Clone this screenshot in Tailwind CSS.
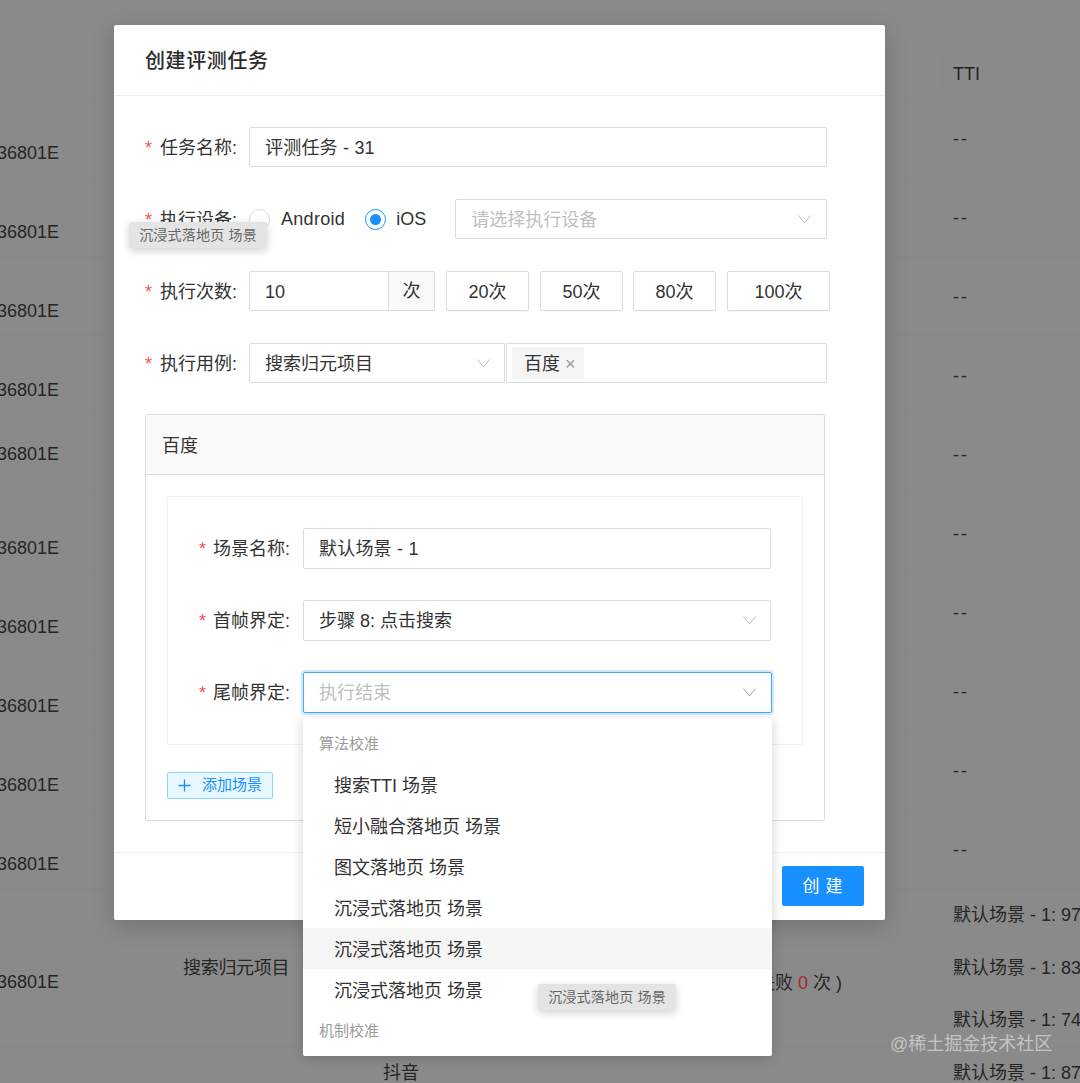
<!DOCTYPE html>
<html lang="zh-CN">
<head>
  <meta charset="UTF-8" />
  <title>创建评测任务</title>
  <script src="https://cdn.jsdelivr.net/npm/@tailwindcss/browser@4"></script>
</head>
<body class="bg-[#8a8a8a]">
  <div class="relative w-[1080px] h-[1083px] overflow-hidden bg-[#8a8a8a] text-[#262626] text-[18px] [font-family:'Liberation_Sans','Noto_Sans_CJK_SC',sans-serif]">

    <!-- table behind the mask -->
    <div>
      <div class="h-[99px] pt-[58px] pl-[942px] border-b border-[#878787]">
        <div class="h-8 pl-[10px] border-l border-[#848484] leading-[32px] text-[18px] font-medium text-[#222]">TTI</div>
      </div>
      <div class="h-[79px] relative border-b border-[#878787]"><span class="absolute -left-[3px] top-[41px] leading-[26px]">36801E</span><span class="absolute left-[953px] top-[27px] leading-[26px] tracking-[2px]">--</span></div>
      <div class="h-[79px] relative border-b border-[#878787]"><span class="absolute -left-[3px] top-[41px] leading-[26px]">36801E</span><span class="absolute left-[953px] top-[27px] leading-[26px] tracking-[2px]">--</span></div>
      <div class="h-[79px] relative border-b border-[#878787]"><span class="absolute -left-[3px] top-[41px] leading-[26px]">36801E</span><span class="absolute left-[953px] top-[27px] leading-[26px] tracking-[2px]">--</span></div>
      <div class="h-[79px] relative border-b border-[#878787]"><span class="absolute -left-[3px] top-[41px] leading-[26px]">36801E</span><span class="absolute left-[953px] top-[27px] leading-[26px] tracking-[2px]">--</span></div>
      <div class="h-[79px] relative border-b border-[#878787]"><span class="absolute -left-[3px] top-[26px] leading-[26px]">36801E</span><span class="absolute left-[953px] top-[27px] leading-[26px] tracking-[2px]">--</span></div>
      <div class="h-[79px] relative border-b border-[#878787]"><span class="absolute -left-[3px] top-[41px] leading-[26px]">36801E</span><span class="absolute left-[953px] top-[27px] leading-[26px] tracking-[2px]">--</span></div>
      <div class="h-[79px] relative border-b border-[#878787]"><span class="absolute -left-[3px] top-[41px] leading-[26px]">36801E</span><span class="absolute left-[953px] top-[27px] leading-[26px] tracking-[2px]">--</span></div>
      <div class="h-[79px] relative border-b border-[#878787]"><span class="absolute -left-[3px] top-[41px] leading-[26px]">36801E</span><span class="absolute left-[953px] top-[27px] leading-[26px] tracking-[2px]">--</span></div>
      <div class="h-[79px] relative border-b border-[#878787]"><span class="absolute -left-[3px] top-[41px] leading-[26px]">36801E</span><span class="absolute left-[953px] top-[27px] leading-[26px] tracking-[2px]">--</span></div>
      <div class="h-[79px] relative border-b border-[#878787]"><span class="absolute -left-[3px] top-[41px] leading-[26px]">36801E</span><span class="absolute left-[953px] top-[27px] leading-[26px] tracking-[2px]">--</span></div>
      <div class="h-[159px] relative border-b border-[#878787]">
        <span class="absolute -left-[3px] top-[80px] leading-[26px]">36801E</span>
        <span class="absolute left-[183px] top-[66px] leading-[26px] tracking-[-0.3px]">搜索归元项目</span>
        <span class="absolute left-[757px] top-[81px] leading-[26px] whitespace-pre">失败 <span class="text-[#a02a2a]">0</span> 次 )</span>
        <span class="absolute left-[953px] top-[13px] leading-[26px] whitespace-nowrap">默认场景 - 1: 97</span>
        <span class="absolute left-[953px] top-[66px] leading-[26px] whitespace-nowrap">默认场景 - 1: 83</span>
        <span class="absolute left-[953px] top-[118px] leading-[26px] whitespace-nowrap">默认场景 - 1: 74</span>
      </div>
      <div class="relative">
        <span class="absolute left-[383px] top-[12px] leading-[26px]">抖音</span>
        <span class="absolute left-[953px] top-[12px] leading-[26px] whitespace-nowrap">默认场景 - 1: 87</span>
      </div>
    </div>

    <!-- modal -->
    <div class="absolute left-[114px] top-[25px] w-[771px] h-[895px] bg-white rounded-[2px] shadow-[0_6px_24px_rgba(0,0,0,0.18)] flex flex-col">
      <div class="h-[71px] shrink-0 pl-[31px] pt-[2px] flex items-center border-b border-[#f0f0f0] text-[20px] font-medium tracking-[0.6px] text-[#2b2b2b]">创建评测任务</div>

      <div class="flex-1 pt-[31px] pl-[31px] flex flex-col">
        <div class="flex items-center h-10">
          <div class="w-[104px] shrink-0 pt-[2px] flex text-[#333]"><span class="w-[15px] text-[#f5515f]">*</span>任务名称:</div>
          <div class="w-[578px] h-10 border border-[#dcdcdc] rounded-[2px] pl-[15px] leading-[40px] text-[#333] tracking-[0.2px]">评测任务 - 31</div>
        </div>

        <div class="flex items-center h-10 mt-8">
          <div class="w-[104px] shrink-0 pt-[2px] flex text-[#333]"><span class="w-[15px] text-[#f5515f]">*</span>执行设备:</div>
          <span class="w-[21px] h-[21px] rounded-full border border-[#d9d9d9]"></span>
          <span class="ml-[11px] text-[#333] tracking-[0.3px]">Android</span>
          <span class="ml-5 w-[21px] h-[21px] rounded-full border border-[#1890ff] flex items-center justify-center"><span class="w-[11px] h-[11px] rounded-full bg-[#1890ff]"></span></span>
          <span class="ml-[10px] text-[#333]">iOS</span>
          <div class="ml-[29px] w-[372px] h-10 border border-[#dcdcdc] rounded-[2px] pl-[15px] pr-[15px] flex items-center justify-between text-[#bfbfbf]">
            <span class="pt-[2px]">请选择执行设备</span>
            <svg class="w-[13px] h-[9px]" viewBox="0 0 13 9" fill="none" stroke="#bfbfbf" stroke-width="1"><path d="M0.5 0.5L6.5 8L12.5 0.5" /></svg>
          </div>
        </div>

        <div class="flex items-center h-10 mt-8">
          <div class="w-[104px] shrink-0 pt-[2px] flex text-[#333]"><span class="w-[15px] text-[#f5515f]">*</span>执行次数:</div>
          <div class="w-[139px] h-10 border border-[#dcdcdc] border-r-0 rounded-l-[2px] pl-[15px] leading-[40px] text-[#333]">10</div>
          <div class="w-[47px] h-10 border border-[#dcdcdc] bg-[#fafafa] rounded-r-[2px] flex items-center justify-center text-[#333]">次</div>
          <button class="ml-[11px] w-[83px] h-10 pt-[2px] border border-[#dcdcdc] rounded-[2px] text-[#333] shadow-[0_1px_2px_rgba(0,0,0,0.04)]">20次</button>
          <button class="ml-[11px] w-[83px] h-10 pt-[2px] border border-[#dcdcdc] rounded-[2px] text-[#333] shadow-[0_1px_2px_rgba(0,0,0,0.04)]">50次</button>
          <button class="ml-[10px] w-[83px] h-10 pt-[2px] border border-[#dcdcdc] rounded-[2px] text-[#333] shadow-[0_1px_2px_rgba(0,0,0,0.04)]">80次</button>
          <button class="ml-[11px] w-[103px] h-10 pt-[2px] border border-[#dcdcdc] rounded-[2px] text-[#333] shadow-[0_1px_2px_rgba(0,0,0,0.04)]">100次</button>
        </div>

        <div class="flex items-center h-10 mt-8">
          <div class="w-[104px] shrink-0 pt-[2px] flex text-[#333]"><span class="w-[15px] text-[#f5515f]">*</span>执行用例:</div>
          <div class="w-[256px] h-10 border border-[#dcdcdc] rounded-l-[2px] pl-[15px] pr-[14px] flex items-center justify-between text-[#333]">
            <span class="pt-[2px]">搜索归元项目</span>
            <svg class="w-[13px] h-[9px]" viewBox="0 0 13 9" fill="none" stroke="#bfbfbf" stroke-width="1"><path d="M0.5 0.5L6.5 8L12.5 0.5" /></svg>
          </div>
          <div class="ml-px w-[321px] h-10 border border-[#dcdcdc] rounded-r-[2px] pl-[5px] flex items-center">
            <span class="w-[72px] h-8 bg-[#f5f5f5] rounded-[2px] pl-3 pt-[2px] flex items-center text-[#333]">百度<span class="ml-[5px] text-[18px] text-[#999]">×</span></span>
          </div>
        </div>

        <!-- case panel -->
        <div class="mt-[31px] w-[680px] h-[407px] border border-[#dcdcdc] rounded-[2px] flex flex-col">
          <div class="h-[60px] shrink-0 bg-[#fafafa] border-b border-[#dcdcdc] pl-4 pt-[3px] flex items-center text-[#333]">百度</div>
          <div class="pt-[21px] pl-[21px]">
            <div class="w-[636px] h-[249px] border border-[#f0f0f0] rounded-[2px] pt-[31px] flex flex-col gap-[31px]">
              <div class="flex items-center h-[41px]">
                <div class="w-[135px] shrink-0 pl-[31px] pt-[2px] flex text-[#333]"><span class="w-[14px] text-[#f5515f]">*</span>场景名称:</div>
                <div class="w-[468px] h-[41px] border border-[#dcdcdc] rounded-[2px] pl-[15px] leading-[41px] text-[#333] tracking-[0.2px]">默认场景 - 1</div>
              </div>
              <div class="flex items-center h-[41px]">
                <div class="w-[135px] shrink-0 pl-[31px] pt-[2px] flex text-[#333]"><span class="w-[14px] text-[#f5515f]">*</span>首帧界定:</div>
                <div class="w-[468px] h-[41px] border border-[#dcdcdc] rounded-[2px] pl-[15px] pr-[14px] flex items-center justify-between text-[#333]">
                  <span class="pt-[2px]">步骤 8: 点击搜索</span>
                  <svg class="w-[13px] h-[9px]" viewBox="0 0 13 9" fill="none" stroke="#bfbfbf" stroke-width="1"><path d="M0.5 0.5L6.5 8L12.5 0.5" /></svg>
                </div>
              </div>
              <div class="flex items-center h-[41px]">
                <div class="w-[135px] shrink-0 pl-[31px] pt-[2px] flex text-[#333]"><span class="w-[14px] text-[#f5515f]">*</span>尾帧界定:</div>
                <div class="w-[469px] h-[41px] border border-[#40a9ff] rounded-[2px] pl-[15px] pr-[15px] flex items-center justify-between text-[#bfbfbf] shadow-[0_0_0_2px_rgba(24,144,255,0.2)]">
                  <span class="pt-[2px]">执行结束</span>
                  <svg class="w-[13px] h-[9px]" viewBox="0 0 13 9" fill="none" stroke="#a6a6a6" stroke-width="1"><path d="M0.5 0.5L6.5 8L12.5 0.5" /></svg>
                </div>
              </div>
            </div>
            <button class="mt-[27px] w-[106px] h-[27px] bg-[#e6f7ff] border border-[#91d5ff] rounded-[2px] flex items-center pl-[10px] text-[15px] text-[#1890ff]">
              <svg class="w-[13px] h-[13px]" viewBox="0 0 13 13" fill="none" stroke="#1890ff" stroke-width="1.3"><path d="M6.5 0.5V12.5M0.5 6.5H12.5" /></svg>
              <span class="ml-[11px]">添加场景</span>
            </button>
          </div>
        </div>
      </div>

      <div class="h-[68px] shrink-0 border-t border-[#f0f0f0] pb-[2px] flex items-center justify-end pr-[21px]">
        <button class="w-[82px] h-10 pt-[2px] pl-[5px] bg-[#1890ff] rounded-[2px] text-white text-[17px] tracking-[6px]">创建</button>
      </div>
    </div>

    <!-- select dropdown -->
    <div class="absolute left-[303px] top-[718px] w-[469px] h-[338px] bg-white rounded-[2px] shadow-[0_2px_12px_rgba(0,0,0,0.18)] flex flex-col text-[#333]">
      <div class="h-[46px] shrink-0 pl-4 pt-[15px] leading-[22px] text-[15px] text-[#9a9a9a]">算法校准</div>
      <div class="h-[41px] pl-[31px] pt-[3px] flex items-center">搜索TTI 场景</div>
      <div class="h-[41px] pl-[31px] pt-[3px] flex items-center">短小融合落地页 场景</div>
      <div class="h-[41px] pl-[31px] pt-[3px] flex items-center">图文落地页 场景</div>
      <div class="h-[41px] pl-[31px] pt-[3px] flex items-center">沉浸式落地页 场景</div>
      <div class="h-[41px] pl-[31px] pt-[3px] flex items-center bg-[#f5f5f5]">沉浸式落地页 场景</div>
      <div class="h-[41px] pl-[31px] pt-[3px] flex items-center">沉浸式落地页 场景</div>
      <div class="h-[46px] pl-4 pt-[10px] leading-[22px] text-[15px] text-[#9a9a9a]">机制校准</div>
    </div>

    <!-- native tooltips -->
    <div class="absolute left-[129px] top-[222px] w-[138px] h-[26px] bg-[#e4e4e4] rounded-[2px] shadow-[0_3px_8px_rgba(0,0,0,0.18)] flex items-center justify-center text-[14px] tracking-[0.2px] text-[#666]">沉浸式落地页 场景</div>
    <div class="absolute left-[538px] top-[984px] w-[138px] h-[26px] bg-[#e4e4e4] rounded-[2px] shadow-[0_3px_8px_rgba(0,0,0,0.18)] flex items-center justify-center text-[14px] tracking-[0.2px] text-[#666]">沉浸式落地页 场景</div>

    <div class="absolute left-[890px] top-[1031px] leading-[26px] text-[18px] text-white/50 whitespace-nowrap">@稀土掘金技术社区</div>
  </div>
</body>
</html>
